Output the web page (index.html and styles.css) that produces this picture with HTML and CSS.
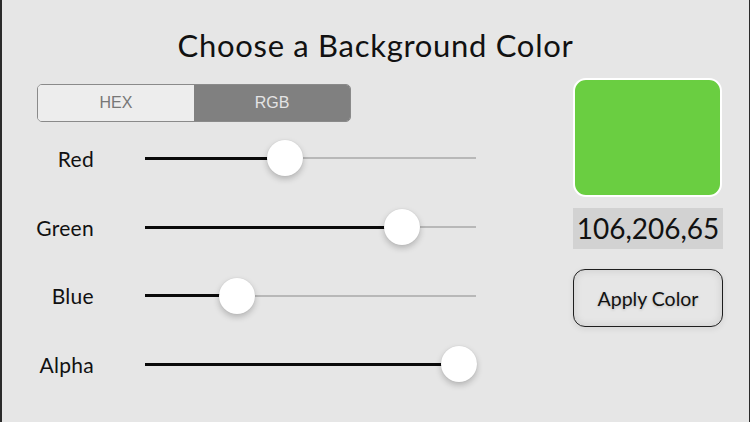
FILE: index.html
```html
<!DOCTYPE html>
<html>
<head>
<meta charset="utf-8">
<link rel="stylesheet" href="styles.css">
</head>
<body>
<div class="screen">
  <h1 class="title">Choose a Background Color</h1>
  <div class="main">
    <div class="left">
      <div class="segmented">
        <div class="seg">HEX</div>
        <div class="seg active">RGB</div>
      </div>
      <div class="row">
        <div class="label">Red</div>
        <div class="slider">
          <div class="track"></div>
          <div class="fill" style="width:140px"></div>
          <div class="thumb" style="left:122px"></div>
        </div>
      </div>
      <div class="row">
        <div class="label">Green</div>
        <div class="slider">
          <div class="track"></div>
          <div class="fill" style="width:257px"></div>
          <div class="thumb" style="left:239px"></div>
        </div>
      </div>
      <div class="row">
        <div class="label">Blue</div>
        <div class="slider">
          <div class="track"></div>
          <div class="fill" style="width:92px"></div>
          <div class="thumb" style="left:74px"></div>
        </div>
      </div>
      <div class="row">
        <div class="label">Alpha</div>
        <div class="slider">
          <div class="track"></div>
          <div class="fill" style="width:314px"></div>
          <div class="thumb" style="left:296px"></div>
        </div>
      </div>
    </div>
    <div class="right">
      <div class="swatch"></div>
      <div class="value">106,206,65</div>
      <div class="apply">Apply Color</div>
    </div>
  </div>
</div>
</body>
</html>
```
FILE: styles.css
```css
html, body {
  margin: 0;
  padding: 0;
}
body {
  width: 750px;
  height: 422px;
  overflow: hidden;
  background: #e6e6e6;
}
.screen {
  box-sizing: border-box;
  width: 750px;
  height: 422px;
  border-left: 2px solid #2b2b2b;
  border-right: 1px solid #2b2b2b;
  background: #e6e6e6;
  font-family: Lato, "Open Sans", sans-serif;
  color: #111;
}
.title {
  margin: 0;
  height: 78px;
  box-sizing: border-box;
  padding-top: 27px;
  font-size: 31px;
  letter-spacing: 0.7px;
  line-height: 36px;
  font-weight: 400;
  text-align: center;
  color: #111;
}
.main {
  display: flex;
  align-items: flex-start;
}
.left {
  width: 540px;
  padding-top: 6px;
}
.segmented {
  display: flex;
  margin-left: 35px;
  width: 314px;
  height: 38px;
  box-sizing: border-box;
  border: 1px solid #8a8a8a;
  border-radius: 5px;
  overflow: hidden;
  font-family: "Liberation Sans", Arial, sans-serif;
  font-size: 16px;
}
.seg {
  flex: 1;
  display: flex;
  align-items: center;
  justify-content: center;
  background: #ededed;
  color: #777;
}
.seg.active {
  background: #808080;
  color: #e4e4e4;
}
.row {
  display: flex;
  align-items: center;
  height: 68.7px;
}
.segmented + .row {
  margin-top: 2px;
}
.label {
  width: 92px;
  text-align: right;
  font-size: 21px;
  letter-spacing: 0.3px;
  color: #111;
}
.slider {
  position: relative;
  margin-left: 51px;
  width: 331px;
  height: 36px;
}
.track {
  position: absolute;
  left: 0;
  right: 0;
  top: 17px;
  height: 2px;
  background: #b8b8b8;
}
.fill {
  position: absolute;
  left: 0;
  top: 16.5px;
  height: 3px;
  background: #0a0a0a;
}
.thumb {
  position: absolute;
  top: 0;
  width: 36px;
  height: 36px;
  border-radius: 50%;
  background: #fff;
  box-shadow: 0 3px 6px rgba(0, 0, 0, 0.22), 0 0 1px rgba(0, 0, 0, 0.15);
}
.right {
  margin-left: 31px;
  width: 150px;
  display: flex;
  flex-direction: column;
}
.swatch {
  width: 149px;
  height: 119px;
  box-sizing: border-box;
  border: 2px solid #fff;
  border-radius: 13px;
  background: #6ace41;
}
.value {
  margin-top: 11px;
  height: 41px;
  background: #d2d2d2;
  font-size: 28px;
  line-height: 41px;
  text-align: center;
  color: #111;
}
.apply {
  margin-top: 20px;
  height: 58px;
  box-sizing: border-box;
  border: 1.5px solid #1e1e1e;
  border-radius: 12px;
  display: flex;
  align-items: center;
  justify-content: center;
  font-size: 19.5px;
  color: #111;
  box-shadow: inset 0 0 8px rgba(0, 0, 0, 0.12), 0 2px 6px rgba(0, 0, 0, 0.08);
  text-shadow: 0 1px 3px rgba(0, 0, 0, 0.2);
}
```
